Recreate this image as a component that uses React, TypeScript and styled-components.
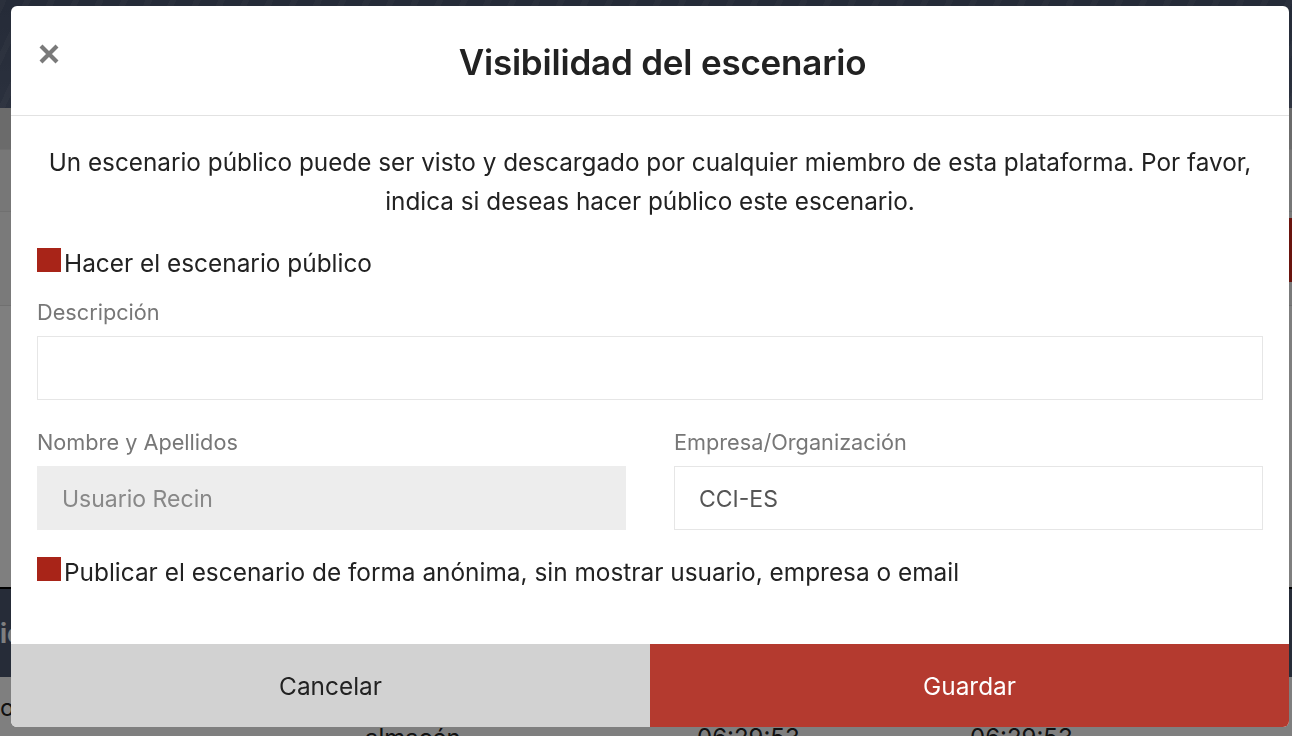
import React from "react";
import styled, { createGlobalStyle } from "styled-components";

const Global = createGlobalStyle`
  html, body { margin: 0; padding: 0; }
  body {
    width: 1292px; height: 736px; overflow: hidden;
    font-family: Inter, "Liberation Sans", Arial, sans-serif;
    background: #fff;
  }
  * { box-sizing: border-box; }
`;

/* ---------- background page ---------- */
const Page = styled.div`
  width: 1292px;
  height: 736px;
  display: flex;
  flex-direction: column;
  background: #fff;
`;

const Banner = styled.div`
  height: 108px;
  flex-shrink: 0;
  background:
    repeating-linear-gradient(115deg, rgba(255,255,255,0.06) 0 6px, transparent 6px 22px),
    linear-gradient(180deg, #4a5670 0%, #56627c 100%);
`;

const ToolRow = styled.div<{ $h: number; $bg: string }>`
  height: ${(p) => p.$h}px;
  flex-shrink: 0;
  background: ${(p) => p.$bg};
  border-bottom: 1px solid #e0e0e0;
  display: flex;
  justify-content: flex-end;
`;

const RedTab = styled.div`
  width: 120px;
  height: 64px;
  margin-top: 6px;
  background: #d4281c;
`;

const Spacer = styled.div`
  flex: 1;
  background: #fff;
`;

const TableHead = styled.div`
  height: 90px;
  flex-shrink: 0;
  background: #4c5870;
  color: #fff;
  font-size: 26px;
  font-weight: 700;
  display: flex;
  align-items: center;
  border-top: 2px solid #000;
`;

const TableRow = styled.div`
  height: 59px;
  flex-shrink: 0;
  display: grid;
  grid-template-columns: 365px 332px 273px 1fr;
  font-size: 24px;
  color: #222;
`;

const Cell = styled.span<{ $top: number }>`
  padding-top: ${(p) => p.$top}px;
`;

/* ---------- overlay & modal ---------- */
const Overlay = styled.div`
  position: fixed;
  inset: 0;
  background: rgba(0, 0, 0, 0.5);
  display: flex;
  align-items: flex-start;
  justify-content: flex-start;
  padding: 6px 0 0 11px;
`;

const Modal = styled.div`
  position: relative;
  width: 1278px;
  height: 721px;
  background: #fff;
  border-radius: 6px;
  overflow: hidden;
  display: flex;
  flex-direction: column;
`;

const Header = styled.div`
  height: 110px;
  border-bottom: 1px solid #e2e2e2;
  display: flex;
  align-items: center;
  justify-content: center;
  padding-left: 25px;
  flex-shrink: 0;
`;

const Title = styled.h1`
  margin: 0;
  padding-top: 2px;
  font-size: 35px;
  font-weight: 600;
  color: #222;
  letter-spacing: -0.2px;
`;

const Close = styled.button`
  position: absolute;
  left: 26px;
  top: 36px;
  width: 24px;
  height: 24px;
  padding: 0;
  border: none;
  background: none;
  cursor: pointer;
  display: flex;
  align-items: center;
  justify-content: center;
`;

const Body = styled.div`
  flex: 1;
  padding: 27px 26px 0;
  display: flex;
  flex-direction: column;
`;

const Intro = styled.p`
  margin: 0 0 27px;
  text-align: center;
  font-size: 24.3px;
  line-height: 39px;
  color: #222;
`;

const CheckRow = styled.label`
  display: flex;
  align-items: baseline;
  gap: 3px;
  font-size: 24.4px;
  line-height: 28px;
  color: #222;
`;

const Box = styled.span`
  width: 24px;
  height: 24px;
  background: #a82418;
  flex-shrink: 0;
`;

const FieldLabel = styled.div`
  font-size: 21.7px;
  color: #777;
  height: 26px;
  line-height: 26px;
  margin-bottom: 11px;
`;

const Input = styled.div<{ $disabled?: boolean }>`
  height: 64px;
  border: 1px solid ${(p) => (p.$disabled ? "#ededed" : "#e6e6e6")};
  background: ${(p) => (p.$disabled ? "#ededed" : "#fff")};
  color: ${(p) => (p.$disabled ? "#888" : "#555")};
  font-size: 23px;
  padding: 2px 24px 0;
  display: flex;
  align-items: center;
`;

const Field = styled.div<{ $mt: number }>`
  margin-top: ${(p) => p.$mt}px;
  display: flex;
  flex-direction: column;
`;

const Cols = styled.div`
  margin-top: 29px;
  display: grid;
  grid-template-columns: 1fr 1fr;
  column-gap: 48px;
`;

const Footer = styled.div`
  height: 83px;
  display: grid;
  grid-template-columns: 1fr 1fr;
  flex-shrink: 0;
`;

const FooterButton = styled.button<{ $primary?: boolean }>`
  border: none;
  margin: 0;
  font-family: inherit;
  font-size: 24.4px;
  background: ${(p) => (p.$primary ? "#b43a2f" : "#d2d2d2")};
  color: ${(p) => (p.$primary ? "#fff" : "#222")};
  cursor: pointer;
`;

export default function App() {
  return (
    <>
      <Global />
      <Page>
        <Banner />
        <ToolRow $h={42} $bg="#d6d6d6" />
        <ToolRow $h={62} $bg="#eeeeee" />
        <ToolRow $h={94} $bg="#f4f4f4">
          <RedTab />
        </ToolRow>
        <Spacer />
        <TableHead>ic</TableHead>
        <TableRow>
          <Cell $top={16}>o</Cell>
          <Cell $top={46}>almacén</Cell>
          <Cell $top={46}>06:29:53</Cell>
          <Cell $top={46}>06:29:53</Cell>
        </TableRow>
      </Page>
      <Overlay>
        <Modal>
          <Close aria-label="Cerrar">
            <svg width="22" height="20" viewBox="0 0 22 20">
              <path d="M3 2 L19 18 M19 2 L3 18" stroke="#7a7a7a" strokeWidth="4.2" strokeLinecap="butt" />
            </svg>
          </Close>
          <Header>
            <Title>Visibilidad del escenario</Title>
          </Header>
          <Body>
            <Intro>
              Un escenario público puede ser visto y descargado por cualquier miembro de esta plataforma. Por favor,
              <br />
              indica si deseas hacer público este escenario.
            </Intro>
            <CheckRow>
              <Box />
              Hacer el escenario público
            </CheckRow>
            <Field $mt={22}>
              <FieldLabel>Descripción</FieldLabel>
              <Input />
            </Field>
            <Cols>
              <Field $mt={0}>
                <FieldLabel>Nombre y Apellidos</FieldLabel>
                <Input $disabled>Usuario Recin</Input>
              </Field>
              <Field $mt={0}>
                <FieldLabel>Empresa/Organización</FieldLabel>
                <Input>CCI-ES</Input>
              </Field>
            </Cols>
            <Field $mt={27}>
              <CheckRow>
                <Box />
                Publicar el escenario de forma anónima, sin mostrar usuario, empresa o email
              </CheckRow>
            </Field>
          </Body>
          <Footer>
            <FooterButton>Cancelar</FooterButton>
            <FooterButton $primary>Guardar</FooterButton>
          </Footer>
        </Modal>
      </Overlay>
    </>
  );
}
